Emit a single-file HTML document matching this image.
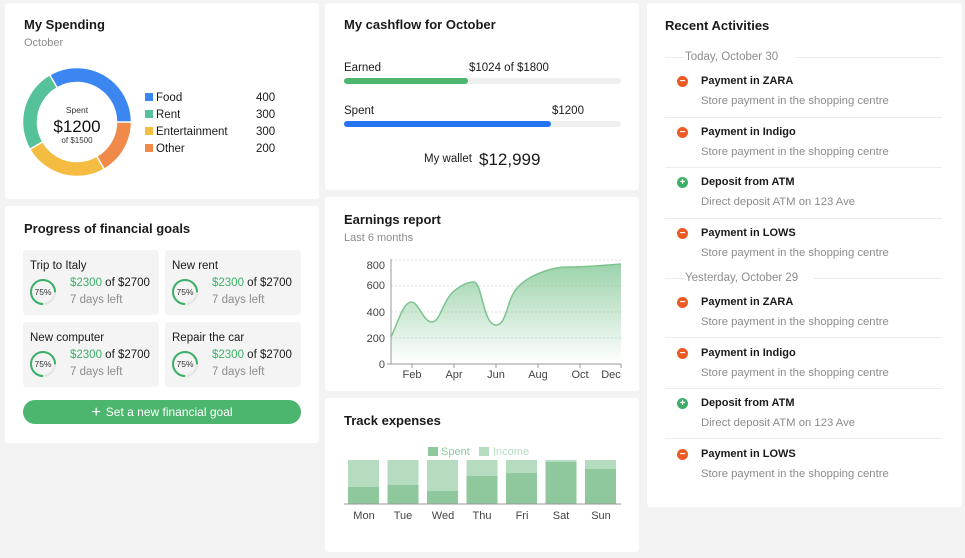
<!DOCTYPE html>
<html><head><meta charset="utf-8"><style>
*{margin:0;padding:0;box-sizing:border-box}
body{width:965px;height:558px;background:#f3f3f3;font-family:"Liberation Sans",sans-serif;color:#1a1a1a;position:relative;overflow:hidden}
.card{position:absolute;background:#fff;border-radius:3px;box-shadow:0 0 1px rgba(0,0,0,.06)}
.a{position:absolute;white-space:nowrap}
.h{font-size:13px;font-weight:bold}
.sub{font-size:11px;color:#8c8c8c}
.t12{font-size:11.5px}
.goal{position:absolute;background:#f4f4f4;border-radius:3px;width:136px;height:65px}
.goal .n{position:absolute;left:7px;top:10px;font-size:11.5px}
.goal .m{position:absolute;left:47px;top:27px;font-size:11.5px}
.goal .m b{font-weight:normal;color:#3cb067}
.goal .d{position:absolute;left:47px;top:44px;font-size:11.5px;color:#8c8c8c}
.goal svg{position:absolute;left:6px;top:28px}
.it .ti{position:absolute;left:54px;font-size:11px;font-weight:bold}
.it .s{position:absolute;left:54px;font-size:11.3px;color:#8c8c8c}
.ic{position:absolute;left:30px;width:11px;height:11px;border-radius:50%;background:#ec5b24;color:#fff;font-size:10px;line-height:11px;text-align:center;font-weight:bold}
.ic.g{background:#3cb067}
.sep{position:absolute;left:18px;width:277px;height:1px;background:#ececec}
</style></head><body>

<!-- My Spending -->
<div class="card" style="left:5px;top:3px;width:314px;height:196px">
<div class="a h" style="left:19px;top:14px">My Spending</div>
<div class="a sub" style="left:19px;top:34px">October</div>
<svg class="a" style="left:12px;top:59px" width="120" height="120" viewBox="0 0 120 120">
<g fill="none" stroke-width="13.5">
<circle cx="60" cy="60" r="47" stroke="#ef8a4b" stroke-dasharray="49.2 246" stroke-dashoffset="0"/>
<circle cx="60" cy="60" r="47" stroke="#f4bd42" stroke-dasharray="73.8 221.5" stroke-dashoffset="-49.2"/>
<circle cx="60" cy="60" r="47" stroke="#55c29a" stroke-dasharray="73.8 221.5" stroke-dashoffset="-123"/>
<circle cx="60" cy="60" r="47" stroke="#3b86f0" stroke-dasharray="98.4 197" stroke-dashoffset="-196.9"/>
</g>
<g stroke="#fff" stroke-width="1.5">
<line x1="99" y1="60" x2="115" y2="60"/>
<line x1="79.5" y1="93.8" x2="87.5" y2="107.6"/>
<line x1="26.2" y1="79.5" x2="12.4" y2="87.5"/>
<line x1="40.5" y1="26.2" x2="32.5" y2="12.4"/>
</g>
<text x="60" y="51" font-size="8.5" text-anchor="middle" fill="#333" font-family="Liberation Sans">Spent</text>
<text x="60" y="70" font-size="17" text-anchor="middle" fill="#111" font-family="Liberation Sans">$1200</text>
<text x="60" y="81" font-size="8" text-anchor="middle" fill="#333" font-family="Liberation Sans">of $1500</text>
</svg>
<div class="a t12" style="left:140px;top:87px;line-height:17px">
<div><span style="display:inline-block;width:8px;height:8px;background:#3b86f0;margin-right:3px"></span>Food</div>
<div><span style="display:inline-block;width:8px;height:8px;background:#55c29a;margin-right:3px"></span>Rent</div>
<div><span style="display:inline-block;width:8px;height:8px;background:#f4bd42;margin-right:3px"></span>Entertainment</div>
<div><span style="display:inline-block;width:8px;height:8px;background:#ef8a4b;margin-right:3px"></span>Other</div>
</div>
<div class="a t12" style="left:251px;top:87px;line-height:17px"><div>400</div><div>300</div><div>300</div><div>200</div></div>
</div>

<!-- Goals -->
<div class="card" style="left:5px;top:206px;width:314px;height:237px">
<div class="a h" style="left:19px;top:15px">Progress of financial goals</div>
<div class="goal" style="left:18px;top:44px"><div class="n">Trip to Italy</div><svg width="28" height="28"><circle cx="14" cy="14" r="12" fill="none" stroke="#e4e4e4" stroke-width="2"/><circle cx="14" cy="14" r="12" fill="none" stroke="#3cb067" stroke-width="2" stroke-dasharray="56.5 75.4" transform="rotate(90 14 14)"/><text x="14" y="17" font-size="8.5" text-anchor="middle" fill="#333" font-family="Liberation Sans">75%</text></svg><div class="m"><b>$2300</b> of $2700</div><div class="d">7 days left</div></div>
<div class="goal" style="left:160px;top:44px"><div class="n">New rent</div><svg width="28" height="28"><circle cx="14" cy="14" r="12" fill="none" stroke="#e4e4e4" stroke-width="2"/><circle cx="14" cy="14" r="12" fill="none" stroke="#3cb067" stroke-width="2" stroke-dasharray="56.5 75.4" transform="rotate(90 14 14)"/><text x="14" y="17" font-size="8.5" text-anchor="middle" fill="#333" font-family="Liberation Sans">75%</text></svg><div class="m"><b>$2300</b> of $2700</div><div class="d">7 days left</div></div>
<div class="goal" style="left:18px;top:116px"><div class="n">New computer</div><svg width="28" height="28"><circle cx="14" cy="14" r="12" fill="none" stroke="#e4e4e4" stroke-width="2"/><circle cx="14" cy="14" r="12" fill="none" stroke="#3cb067" stroke-width="2" stroke-dasharray="56.5 75.4" transform="rotate(90 14 14)"/><text x="14" y="17" font-size="8.5" text-anchor="middle" fill="#333" font-family="Liberation Sans">75%</text></svg><div class="m"><b>$2300</b> of $2700</div><div class="d">7 days left</div></div>
<div class="goal" style="left:160px;top:116px"><div class="n">Repair the car</div><svg width="28" height="28"><circle cx="14" cy="14" r="12" fill="none" stroke="#e4e4e4" stroke-width="2"/><circle cx="14" cy="14" r="12" fill="none" stroke="#3cb067" stroke-width="2" stroke-dasharray="56.5 75.4" transform="rotate(90 14 14)"/><text x="14" y="17" font-size="8.5" text-anchor="middle" fill="#333" font-family="Liberation Sans">75%</text></svg><div class="m"><b>$2300</b> of $2700</div><div class="d">7 days left</div></div>
<div class="a" style="left:18px;top:194px;width:278px;height:24px;border-radius:12px;background:#4cb56e;color:#fff;font-size:12px;text-align:center;line-height:24px"><span style="font-size:16px;vertical-align:-1px;margin-right:5px">+</span>Set a new financial goal</div>
</div>

<!-- Cashflow -->
<div class="card" style="left:325px;top:3px;width:314px;height:187px">
<div class="a h" style="left:19px;top:14px">My cashflow for October</div>
<div class="a t12" style="left:19px;top:59px">Earned</div>
<div class="a t12" style="left:144px;top:59px">$1024 of $1800</div>
<div class="a" style="left:19px;top:75px;width:277px;height:6px;border-radius:3px;background:#efefef"><div style="width:124px;height:6px;border-radius:3px;background:#4cb56e"></div></div>
<div class="a t12" style="left:19px;top:102px">Spent</div>
<div class="a t12" style="left:227px;top:102px">$1200</div>
<div class="a" style="left:19px;top:118px;width:277px;height:6px;border-radius:3px;background:#efefef"><div style="width:207px;height:6px;border-radius:3px;background:#2673ef"></div></div>
<div class="a t12" style="left:99px;top:150px">My wallet</div>
<div class="a" style="left:154px;top:147px;font-size:17px">$12,999</div>
</div>

<!-- Earnings -->
<div class="card" style="left:325px;top:197px;width:314px;height:194px">
<div class="a h" style="left:19px;top:15px">Earnings report</div>
<div class="a sub" style="left:19px;top:35px">Last 6 months</div>
<svg class="a" style="left:0;top:0" width="314" height="194">
<defs><linearGradient id="gr" x1="0" y1="0" x2="0" y2="1"><stop offset="0" stop-color="#7cc48f" stop-opacity=".75"/><stop offset="1" stop-color="#7cc48f" stop-opacity="0"/></linearGradient></defs>
<g stroke="#ddd" stroke-dasharray="2 2"><line x1="66" y1="63" x2="296" y2="63"/><line x1="66" y1="89" x2="296" y2="89"/><line x1="66" y1="115" x2="296" y2="115"/><line x1="66" y1="141" x2="296" y2="141"/></g>
<path d="M66 140 C72 128,78 105,86 105 C94 105,98 125,107 125 C115 125,118 104,128 95 C136 88,143 85,149 85 C157 85,158 128,171 128 C182 128,181 104,192 91 C200 82,210 78,215 76 C225 72,232 70,244 70 C258 70,272 69,296 67 L296 167 L66 167 Z" fill="url(#gr)"/>
<path d="M66 140 C72 128,78 105,86 105 C94 105,98 125,107 125 C115 125,118 104,128 95 C136 88,143 85,149 85 C157 85,158 128,171 128 C182 128,181 104,192 91 C200 82,210 78,215 76 C225 72,232 70,244 70 C258 70,272 69,296 67" fill="none" stroke="#7cc48f" stroke-width="1.5"/>
<line x1="66" y1="62" x2="66" y2="167" stroke="#999"/><line x1="66" y1="167" x2="296" y2="167" stroke="#999"/>
<g stroke="#999"><line x1="62" y1="167" x2="66" y2="167"/><line x1="87" y1="167" x2="87" y2="171"/><line x1="129" y1="167" x2="129" y2="171"/><line x1="171" y1="167" x2="171" y2="171"/><line x1="213" y1="167" x2="213" y2="171"/><line x1="255" y1="167" x2="255" y2="171"/><line x1="296" y1="167" x2="296" y2="171"/></g>
<g font-size="11" fill="#444" font-family="Liberation Sans" text-anchor="end"><text x="60" y="72">800</text><text x="60" y="92">600</text><text x="60" y="119">400</text><text x="60" y="145">200</text><text x="60" y="171">0</text></g>
<g font-size="11" fill="#444" font-family="Liberation Sans" text-anchor="middle"><text x="87" y="181">Feb</text><text x="129" y="181">Apr</text><text x="171" y="181">Jun</text><text x="213" y="181">Aug</text><text x="255" y="181">Oct</text><text x="286" y="181">Dec</text></g>
</svg>
</div>

<!-- Track expenses -->
<div class="card" style="left:325px;top:398px;width:314px;height:154px">
<div class="a h" style="left:19px;top:15px">Track expenses</div>
<svg class="a" style="left:0;top:0" width="314" height="154">
<rect x="103" y="49" width="10" height="9" fill="#8fc89d"/><text x="116" y="57" font-size="11" fill="#8fc89d" font-family="Liberation Sans">Spent</text>
<rect x="154" y="49" width="10" height="9" fill="#b5dcbf"/><text x="168" y="57" font-size="11" fill="#b5dcbf" font-family="Liberation Sans">Income</text>
<g fill="#b5dcbf"><rect x="23" y="62" width="31" height="44"/><rect x="62.5" y="62" width="31" height="44"/><rect x="102" y="62" width="31" height="44"/><rect x="141.5" y="62" width="31" height="44"/><rect x="181" y="62" width="31" height="44"/><rect x="220.5" y="62" width="31" height="44"/><rect x="260" y="62" width="31" height="44"/></g>
<g fill="#8fc89d"><rect x="23" y="89" width="31" height="17"/><rect x="62.5" y="87" width="31" height="19"/><rect x="102" y="93" width="31" height="13"/><rect x="141.5" y="78" width="31" height="28"/><rect x="181" y="75" width="31" height="31"/><rect x="220.5" y="64" width="31" height="42"/><rect x="260" y="71" width="31" height="35"/></g>
<line x1="19" y1="106" x2="296" y2="106" stroke="#999"/>
<g font-size="11" fill="#444" font-family="Liberation Sans" text-anchor="middle"><text x="39" y="121">Mon</text><text x="78" y="121">Tue</text><text x="118" y="121">Wed</text><text x="157" y="121">Thu</text><text x="197" y="121">Fri</text><text x="236" y="121">Sat</text><text x="276" y="121">Sun</text></g>
</svg>
</div>

<!-- Recent Activities -->
<div class="card it" style="left:647px;top:3px;width:315px;height:504px">
<div class="a h" style="left:18px;top:15px">Recent Activities</div>
<div class="sep" style="top:54px;width:20px"></div><div class="sep" style="top:54px;left:148px;width:147px"></div>
<div class="a sub" style="left:38px;top:48px;font-size:11.5px">Today, October 30</div>
<div class="ic" style="top:73px">−</div><div class="ti" style="top:72px">Payment in ZARA</div><div class="s" style="top:92px">Store payment in the shopping centre</div><div class="sep" style="top:114px"></div>
<div class="ic" style="top:124px">−</div><div class="ti" style="top:123px">Payment in Indigo</div><div class="s" style="top:143px">Store payment in the shopping centre</div><div class="sep" style="top:164px"></div>
<div class="ic g" style="top:174px">+</div><div class="ti" style="top:173px">Deposit from ATM</div><div class="s" style="top:193px">Direct deposit ATM on 123 Ave</div><div class="sep" style="top:215px"></div>
<div class="ic" style="top:225px">−</div><div class="ti" style="top:224px">Payment in LOWS</div><div class="s" style="top:244px">Store payment in the shopping centre</div>
<div class="sep" style="top:275px;width:20px"></div><div class="sep" style="top:275px;left:166px;width:129px"></div>
<div class="a sub" style="left:38px;top:269px;font-size:11.5px">Yesterday, October 29</div>
<div class="ic" style="top:294px">−</div><div class="ti" style="top:293px">Payment in ZARA</div><div class="s" style="top:313px">Store payment in the shopping centre</div><div class="sep" style="top:334px"></div>
<div class="ic" style="top:345px">−</div><div class="ti" style="top:344px">Payment in Indigo</div><div class="s" style="top:364px">Store payment in the shopping centre</div><div class="sep" style="top:385px"></div>
<div class="ic g" style="top:395px">+</div><div class="ti" style="top:394px">Deposit from ATM</div><div class="s" style="top:414px">Direct deposit ATM on 123 Ave</div><div class="sep" style="top:435px"></div>
<div class="ic" style="top:446px">−</div><div class="ti" style="top:445px">Payment in LOWS</div><div class="s" style="top:465px">Store payment in the shopping centre</div>
</div>
</body></html>
